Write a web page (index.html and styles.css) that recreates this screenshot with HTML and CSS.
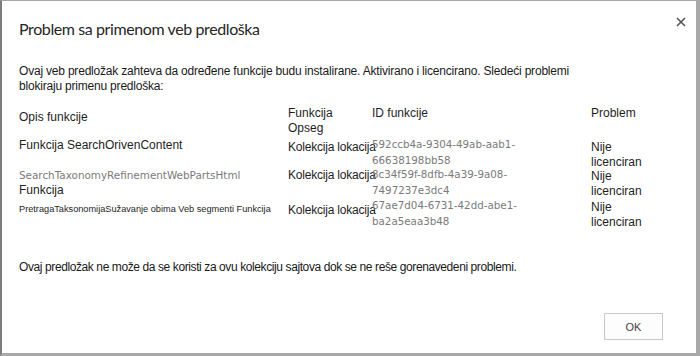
FILE: index.html
```html
<!DOCTYPE html>
<html>
<head>
<meta charset="utf-8">
<link rel="stylesheet" href="styles.css">
</head>
<body>
<div class="dialog">
  <button class="close" aria-label="Zatvori">
    <svg width="10" height="10" viewBox="0 0 10 10"><path d="M1 1 L9 9 M9 1 L1 9" stroke="#555" stroke-width="1.6" fill="none"/></svg>
  </button>
  <h1 class="title">Problem sa primenom veb predloška</h1>
  <p class="intro">Ovaj veb predložak zahteva da određene funkcije budu instalirane. Aktivirano i licencirano. Sledeći problemi blokiraju primenu predloška:</p>
  <div class="table">
    <div class="cell head c1"><span class="h-opis">Opis funkcije</span></div>
    <div class="cell head c2">Funkcija<br>Opseg</div>
    <div class="cell head c3">ID funkcije</div>
    <div class="cell head c4">Problem</div>

    <div class="cell r1 c1"><span class="t-desc">Funkcija SearchOrivenContent</span></div>
    <div class="cell r1 c2"><span class="t-scope">Kolekcija lokacija</span></div>
    <div class="cell r1 c3 id">592ccb4a-9304-49ab-aab1-<br>66638198bb58</div>
    <div class="cell r1 c4 prob">Nije<br>licenciran</div>

    <div class="cell r2 c1"><span class="t-gray">SearchTaxonomyRefinementWebPartsHtml</span><br><span class="t-fn">Funkcija</span></div>
    <div class="cell r2 c2"><span class="t-scope">Kolekcija lokacija</span></div>
    <div class="cell r2 c3 id">8c34f59f-8dfb-4a39-9a08-<br>7497237e3dc4</div>
    <div class="cell r2 c4 prob">Nije<br>licenciran</div>

    <div class="cell r3 c1"><span class="t-small">PretragaTaksonomijaSužavanje obima Veb segmenti Funkcija</span></div>
    <div class="cell r3 c2"><span class="t-scope">Kolekcija lokacija</span></div>
    <div class="cell r3 c3 id">67ae7d04-6731-42dd-abe1-<br>ba2a5eaa3b48</div>
    <div class="cell r3 c4 prob">Nije<br>licenciran</div>
  </div>
  <p class="outro">Ovaj predložak ne može da se koristi za ovu kolekciju sajtova dok se ne reše gorenavedeni problemi.</p>
  <div class="actions">
    <button class="ok">OK</button>
  </div>
</div>
</body>
</html>
```

FILE: styles.css
```css
html, body {
  margin: 0;
  padding: 0;
  background: #ffffff;
}

.dialog {
  position: relative;
  box-sizing: border-box;
  width: 700px;
  height: 356px;
  background: #ffffff;
  border-left: 2px solid #7d7d7d;
  border-top: 1px solid #a6a6a6;
  border-right: 4px solid #a9a9a9;
  border-bottom: 3px solid #a9a9a9;
  padding: 0 0 0 17px;
  font-family: "Liberation Sans", Arial, sans-serif;
  color: #1e1e1e;
  display: flex;
  flex-direction: column;
}

.close {
  position: absolute;
  top: 15px;
  right: 9px;
  width: 12px;
  height: 12px;
  padding: 0;
  margin: 0;
  border: 0;
  background: transparent;
  display: flex;
  align-items: center;
  justify-content: center;
}

.title {
  margin: 18px 0 0 0;
  font-family: "Lato", sans-serif;
  font-weight: 400;
  font-size: 16px;
  letter-spacing: -0.4px;
  line-height: 20px;
  color: #262626;
}

.intro {
  margin: 25px 0 0 0;
  width: 580px;
  font-size: 12px;
  letter-spacing: -0.2px;
  line-height: 15px;
  color: #1a1a1a;
}

.table {
  margin-top: 12px;
  display: grid;
  grid-template-columns: 269px 84px 219px 1fr;
  grid-template-rows: 31px 31px 31px 34px;
  font-size: 12px;
  line-height: 15px;
}

.cell {
  white-space: nowrap;
  overflow: visible;
}

.head { padding-top: 0; }
.h-opis { display: block; padding-top: 4px; }

.t-scope { letter-spacing: -0.2px; }

.r1 { padding-top: 1px; }
.r1.c2, .r1.c4 { padding-top: 3px; }

.r2.c1 { padding-top: 0; }
.r2.c4 { padding-top: 1px; }

.r3.c1 { padding-top: 2px; }
.r3.c2 { padding-top: 4px; }
.r3.c4 { padding-top: 1px; }

.t-gray {
  font-family: "DejaVu Sans", sans-serif;
  font-size: 10.4px;
  color: #7a7a7a;
}

.t-small {
  font-size: 9.2px;
}

.id {
  font-family: "DejaVu Sans", sans-serif;
  font-size: 10.3px;
  line-height: 16px;
  color: #7a7a7a;
  margin-top: -2px;
}

.outro {
  margin: 27px 0 0 0;
  font-size: 12px;
  letter-spacing: -0.4px;
  line-height: 15px;
  color: #1a1a1a;
}

.actions {
  margin-top: auto;
  margin-bottom: 13px;
  margin-right: 33px;
  display: flex;
  justify-content: flex-end;
}

.ok {
  width: 59px;
  height: 27px;
  border: 1px solid #c8c8c8;
  background: #fdfdfd;
  font-family: "Liberation Sans", Arial, sans-serif;
  font-size: 11px;
  color: #444444;
  padding: 0;
}
```
